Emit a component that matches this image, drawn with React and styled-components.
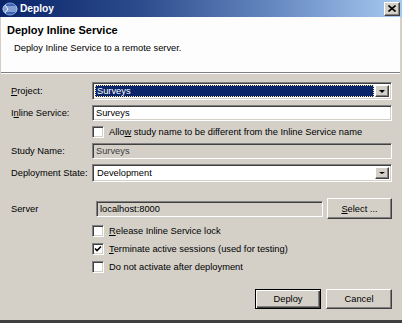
import React from 'react';
import styled, { css, createGlobalStyle } from 'styled-components';

const GlobalStyle = createGlobalStyle`
  html, body {
    margin: 0;
    padding: 0;
    background: #d4d0c8;
  }
  body {
    font-family: "Liberation Sans", Arial, sans-serif;
    font-size: 9.3px;
    color: #000;
  }
`;

const sunken = css`
  box-sizing: border-box;
  border: 1px solid;
  border-color: #808080 #fff #fff #808080;
  box-shadow: inset 1px 1px 0 #404040, inset -1px -1px 0 #d4d0c8;
`;

const raised = css`
  box-sizing: border-box;
  border: 1px solid;
  border-color: #fff #404040 #404040 #fff;
  box-shadow: inset -1px -1px 0 #808080;
  background: #d4d0c8;
`;

const Window = styled.div`
  width: 402px;
  height: 323px;
  box-sizing: border-box;
  background: #d4d0c8;
  border-bottom: 3px solid #404040;
  display: flex;
  flex-direction: column;
  overflow: hidden;
`;

const TitleBar = styled.div`
  height: 17px;
  flex-shrink: 0;
  display: flex;
  align-items: center;
  padding: 0 2px 0 2px;
  background: linear-gradient(to right, #0a246a 0%, #2c4c8c 35%, #6a8cc4 70%, #a6caf0 100%);
`;

const TitleText = styled.span`
  color: #fff;
  font-weight: bold;
  font-size: 10.2px;
  margin-left: 2px;
`;

const CloseButton = styled.div`
  ${raised};
  margin-left: auto;
  width: 16px;
  height: 14px;
  display: flex;
  align-items: center;
  justify-content: center;
`;

const Frame = styled.div`
  flex: 1;
  display: flex;
  flex-direction: column;
  border-left: 1px solid #d4d0c8;
  border-right: 2px solid #d4d0c8;
`;

const Header = styled.div`
  height: 49px;
  flex-shrink: 0;
  background: #fcfdfc;
  border-bottom: 1px solid #808080;
  padding: 6px 0 0 6px;
`;

const HeaderTitle = styled.div`
  font-weight: bold;
  font-size: 11px;
  line-height: 14px;
`;

const HeaderText = styled.div`
  margin: 5px 0 0 7px;
  line-height: 12px;
`;

const Body = styled.div`
  border-top: 1px solid #fff;
  padding: 8px 8px 0 10px;
  display: flex;
  flex-direction: column;
`;

const Grid = styled.div`
  display: grid;
  grid-template-columns: 81px 1fr;
  row-gap: 5px;
  align-items: center;
`;

const Label = styled.div`
  line-height: 12px;
  white-space: nowrap;
`;

const Field = styled.div`
  ${sunken};
  height: 16px;
  display: flex;
  align-items: center;
  padding-left: 3px;
  background: ${(p) => (p.$disabled ? '#d4d0c8' : '#fff')};
  color: ${(p) => (p.$muted ? '#404040' : '#000')};
`;

const Combo = styled.div`
  ${sunken};
  height: 18px;
  display: flex;
  align-items: stretch;
  padding: 2px;
  background: #fff;
`;

const ComboValue = styled.div`
  flex: 1;
  display: flex;
  align-items: center;
  padding-left: 2px;
  margin-right: 1px;
  ${(p) =>
    p.$selected &&
    css`
      background: #0a246a;
      color: #fff;
      outline: 1px dotted #f4e4a0;
      outline-offset: -1px;
    `}
`;

const DropButton = styled.div`
  ${raised};
  width: 14px;
  display: flex;
  align-items: center;
  justify-content: center;
`;

const Arrow = styled.div`
  width: 0;
  height: 0;
  border-left: 3px solid transparent;
  border-right: 3px solid transparent;
  border-top: ${(p) => (p.$small ? 2 : 3)}px solid #000;
`;

const CheckRow = styled.label`
  display: flex;
  align-items: center;
  gap: 5px;
  height: 12px;
  line-height: 12px;
  white-space: nowrap;
`;

const Box = styled.span`
  ${sunken};
  width: 12px;
  height: 12px;
  flex-shrink: 0;
  background: #fff;
  display: flex;
  align-items: center;
  justify-content: center;
`;

const ServerRow = styled.div`
  margin-top: 16px;
  display: grid;
  grid-template-columns: 81px 1fr 65px;
  column-gap: 4px;
  align-items: center;
`;

const Options = styled.div`
  margin: 6px 0 0 81px;
  display: flex;
  flex-direction: column;
  gap: 6px;
`;

const Button = styled.div`
  ${raised};
  height: ${(p) => p.$h || 20}px;
  display: flex;
  align-items: center;
  justify-content: center;
  ${(p) =>
    p.$default &&
    css`
      border: 1px solid #000;
      box-shadow: inset 1px 1px 0 #fff, inset -1px -1px 0 #404040,
        inset -2px -2px 0 #808080;
    `}
`;

const Footer = styled.div`
  margin-top: 16px;
  display: flex;
  justify-content: flex-end;
  gap: 5px;
`;

const FooterButton = styled(Button)`
  width: 66px;
`;

const U = styled.span`
  text-decoration: underline;
`;

const Check = ({ checked, children }) => (
  <CheckRow>
    <Box>
      {checked && (
        <svg width="8" height="8" viewBox="0 0 8 8">
          <path d="M1 3.5 L3 5.5 L7 1.5" stroke="#000" strokeWidth="1.6" fill="none" />
        </svg>
      )}
    </Box>
    <span>{children}</span>
  </CheckRow>
);

const AppIcon = () => (
  <svg width="16" height="14" viewBox="0 0 16 14">
    <ellipse cx="8" cy="7" rx="7" ry="6" fill="#3c64b4" />
    <ellipse cx="8" cy="7" rx="7" ry="6" fill="none" stroke="#9cb8e8" strokeWidth="0.8" />
    <path d="M1 5 H15 M0.5 7 H15.5 M1 9 H15" stroke="#d8e4f8" strokeWidth="0.9" />
    <path d="M3 3 L6 7 L3 11" stroke="#eef3fc" strokeWidth="1" fill="none" />
  </svg>
);

const App = () => {
  return (
    <>
      <GlobalStyle />
      <Window>
        <TitleBar>
          <AppIcon />
          <TitleText>Deploy</TitleText>
          <CloseButton>
            <svg width="8" height="7" viewBox="0 0 8 7">
              <path d="M0.5 0.5 L7.5 6.5 M7.5 0.5 L0.5 6.5" stroke="#000" strokeWidth="1.6" />
            </svg>
          </CloseButton>
        </TitleBar>
        <Frame>
          <Header>
            <HeaderTitle>Deploy Inline Service</HeaderTitle>
            <HeaderText>Deploy Inline Service to a remote server.</HeaderText>
          </Header>
          <Body>
            <Grid>
              <Label>
                <U>P</U>roject:
              </Label>
              <Combo>
                <ComboValue $selected>Surveys</ComboValue>
                <DropButton>
                  <Arrow />
                </DropButton>
              </Combo>

              <Label>
                I<U>n</U>line Service:
              </Label>
              <Field>Surveys</Field>

              <span />
              <Check>
                Allo<U>w</U> study name to be different from the Inline Service name
              </Check>

              <Label>Study Name:</Label>
              <Field $disabled $muted>
                Surveys
              </Field>

              <Label>Deployment State:</Label>
              <Combo>
                <ComboValue>Development</ComboValue>
                <DropButton>
                  <Arrow $small />
                </DropButton>
              </Combo>
            </Grid>

            <ServerRow>
              <Label>Server</Label>
              <Field $disabled>localhost:8000</Field>
              <Button $h={21}>
                <span>
                  <U>S</U>elect ...
                </span>
              </Button>
            </ServerRow>

            <Options>
              <Check>
                <U>R</U>elease Inline Service lock
              </Check>
              <Check checked>
                <U>T</U>erminate active sessions (used for testing)
              </Check>
              <Check>Do not activate after deployment</Check>
            </Options>

            <Footer>
              <FooterButton $default>Deploy</FooterButton>
              <FooterButton>Cancel</FooterButton>
            </Footer>
          </Body>
        </Frame>
      </Window>
    </>
  );
};

export default App;
